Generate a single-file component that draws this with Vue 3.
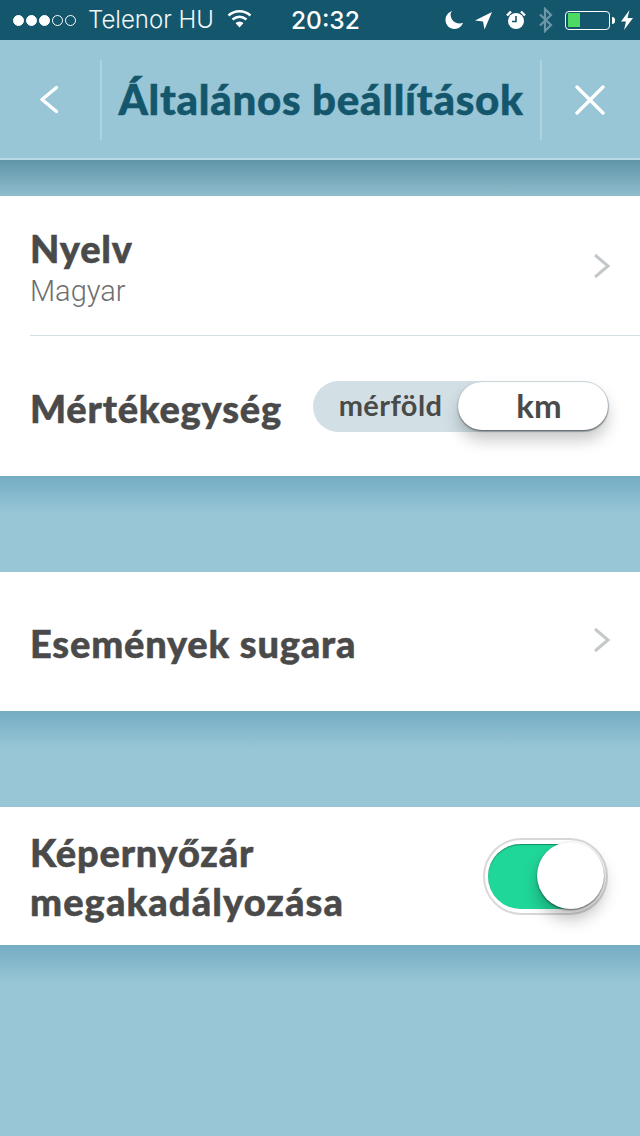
<template>
  <div class="screen">
    <div class="status">
      <div class="status-left">
        <span class="dots">
          <i class="dot on"></i><i class="dot on"></i><i class="dot on"></i><i class="dot"></i><i class="dot"></i>
        </span>
        <span class="carrier">Telenor HU</span>
        <svg class="wifi" width="26" height="20" viewBox="0 0 26 20">
          <path d="M1.5 6.5C7.8.9 17.2.9 23.500 6.500" fill="none" stroke="#fff" stroke-width="2.400"/>
          <path d="M5.500 10.500C9.900 6.900 15.100 6.900 19.500 10.500" fill="none" stroke="#fff" stroke-width="2.400"/>
          <path d="M8.500 14C11 12 14 12 16.500 14L12.500 18.500Z" fill="#fff"/>
        </svg>
      </div>
      <span class="time">20:32</span>
      <div class="status-right">
        <svg class="moon" width="19" height="20" viewBox="0 0 19 20"><path d="M7.500 1C3.500 2 .5 5.500.5 10c0 5 4 9 9 9 4 0 7.300-2.600 8.500-6.200-1.100.5-2.200.7-3.400.7-5 0-9-4-9-9 0-1.300.6-2.700 1.900-3.500Z" fill="#fff"/></svg>
        <svg class="arrow" width="19" height="19" viewBox="0 0 19 19"><path d="M18 1 1 9.500l8 1 1.500 8Z" fill="#fff"/></svg>
        <svg class="alarm" width="20" height="20" viewBox="0 0 20 20">
          <circle cx="10" cy="11" r="8" fill="#fff"/>
          <path d="M10 6v5.500H6" fill="none" stroke="#14566b" stroke-width="1.600"/>
          <path d="M1 5.500 5 1.500M19 5.500l-4-4" stroke="#fff" stroke-width="2.400" fill="none"/>
        </svg>
        <svg class="bt" width="15" height="26" viewBox="0 0 15 26"><path d="M2 7.500l11 10.500-6 6V2l6 6L2 18.500" fill="none" stroke="#6c97a6" stroke-width="2.200"/></svg>
        <div class="battery"><div class="battery-fill"></div></div>
        <div class="battery-tip"></div>
        <svg class="bolt" width="12" height="20" viewBox="0 0 12 20"><path d="M8.500 0 0 11.500h5L3 20l9-12H6.500Z" fill="#fff"/></svg>
      </div>
    </div>

    <header class="nav">
      <button class="nav-btn nav-back" aria-label="Vissza">
        <svg width="22" height="32" viewBox="0 0 22 32"><path d="M19.500 3.500 5 15.500l14.500 12" fill="none" stroke="#fff" stroke-width="3.400" stroke-linecap="round" stroke-linejoin="round"/></svg>
      </button>
      <h1 class="title">Általános beállítások</h1>
      <button class="nav-btn nav-close" aria-label="Bezárás">
        <svg width="30" height="30" viewBox="0 0 30 30"><path d="M2 2l26 26M28 2 2 28" fill="none" stroke="#fff" stroke-width="3.400" stroke-linecap="round"/></svg>
      </button>
    </header>

    <main class="content">
      <section class="card first">
        <div class="row lang">
          <div>
            <div class="label">Nyelv</div>
            <div class="sub">Magyar</div>
          </div>
          <svg class="chev" width="18" height="26" viewBox="0 0 18 26"><path d="M2 2l13 11L2 24" fill="none" stroke="#c4c8ca" stroke-width="3"/></svg>
        </div>
        <div class="sep"></div>
        <div class="row unit">
          <div class="label">Mértékegység</div>
          <div class="seg">
            <span class="seg-off">mérföld</span>
            <span class="seg-on">km</span>
          </div>
        </div>
      </section>

      <section class="card radius">
        <div class="label">Események sugara</div>
        <svg class="chev" width="18" height="26" viewBox="0 0 18 26"><path d="M2 2l13 11L2 24" fill="none" stroke="#c4c8ca" stroke-width="3"/></svg>
      </section>

      <section class="card lock">
        <div class="label">Képernyőzár<br><span class="wide">megakadályozása</span></div>
        <div class="switch"><div class="track"></div><div class="knob"></div></div>
      </section>
    </main>
  </div>
</template>

<script setup>
</script>

<style>
html, body { margin: 0; background: #98c6d6; }
</style>

<style scoped>
.screen {
  width: 640px;
  height: 1136px;
  overflow: hidden;
  background: #98c6d6;
  display: flex;
  flex-direction: column;
  font-family: Lato, "Noto Sans", sans-serif;
}
.status {
  height: 40px;
  background: #14566b;
  color: #fff;
  position: relative;
  display: flex;
  align-items: center;
  justify-content: space-between;
  padding: 0 7px 0 13px;
  font-family: Inter, "Liberation Sans", sans-serif;
  flex: none;
}
.status-left, .status-right { display: flex; align-items: center; }
.dots { display: flex; gap: 2px; margin-right: 12px; }
.dot { width: 11px; height: 11px; box-sizing: border-box; border: 1px solid #fff; border-radius: 50%; }
.dot.on { background: #fff; }
.carrier { font-size: 24px; font-weight: 300; line-height: 40px; color: #f0f6f8; }
.wifi { margin-left: 13px; margin-top: -3px; }
.time { position: absolute; left: 291px; top: 0; line-height: 41px; font-size: 24.500px; font-weight: 500; }
.moon { margin-right: 10px; }
.arrow { margin-right: 13px; }
.alarm { margin-right: 12px; }
.bt { margin-right: 12px; }
.battery {
  width: 45px; height: 19px; box-sizing: border-box;
  border: 1.500px solid #fff; border-radius: 4px; padding: 1.500px;
}
.battery-fill { width: 12px; height: 100%; background: #4cd964; }
.battery-tip { width: 3px; height: 7px; margin-left: 2px; margin-right: 6px; background: #fff; border-radius: 0 3px 3px 0; }
.nav {
  height: 118px;
  flex: none;
  display: flex;
  align-items: center;
  border-bottom: 2px solid #b9dbe6;
}
.nav-btn {
  appearance: none; border: 0; background: none; padding: 0;
  height: 80px; display: flex; align-items: center; justify-content: center;
  flex: none; margin-top: 2px;
}
.nav-back { width: 102px; border-right: 2px solid #aed2de; box-sizing: border-box; padding-right: 4px; }
.nav-close { width: 100px; border-left: 2px solid #aed2de; box-sizing: border-box; padding-right: 2px; }
.title {
  flex: 1; margin: 0; text-align: center; white-space: nowrap;
  font-size: 42px; font-weight: 900; color: #14566b; line-height: 80px;
  letter-spacing: .74px; -webkit-text-stroke: .5px #14566b;
}
.content {
  flex: 1;
  display: flex;
  flex-direction: column;
  padding-top: 36px;
  background: linear-gradient(#5f95a8 0, #8fbdcd 36px, #98c6d6 36px);
}
.card { background: #fff; position: relative; }
.first { height: 280px; }
.card::after {
  content: ""; position: absolute; left: 0; right: 0; top: 100%; height: 38px;
  background: linear-gradient(#74adc3, #98c6d6);
}
.row { display: flex; align-items: center; justify-content: space-between; padding-left: 30px; }
.lang { height: 139px; padding-right: 29px; }
.sep { height: 1px; background: #d3dfe3; margin-left: 30px; }
.unit { height: 140px; padding-right: 31px; }
.label {
  font-size: 38px; font-weight: 900; color: #4a4a4a; line-height: 49px;
  letter-spacing: .8px; -webkit-text-stroke: .5px #4a4a4a;
}
.wide { letter-spacing: 1.1px; }
.sub { font-size: 29px; font-weight: 300; color: #6f6f6f; line-height: 34px; margin-top: 1px; font-family: Roboto, "Liberation Sans", sans-serif; }
.chev { flex: none; }
.seg {
  width: 296px; height: 51px; border-radius: 26px; background: #d2e0e5;
  display: flex; align-items: center; position: relative;
}
.seg-off { width: 145px; box-sizing: border-box; padding-left: 10px; text-align: center; font-size: 29px; line-height: 46px; font-weight: 700; color: #4a4a4a; letter-spacing: .4px; margin-top: -2px; }
.seg-on {
  width: 150px; height: 48px; line-height: 46px; box-sizing: border-box; padding-left: 12px; border-radius: 24px; background: #fff; text-align: center;
  font-size: 33px; font-weight: 700; color: #4a4a4a;
  box-shadow: 0 1px 2px rgba(0,0,0,.5), 0 10px 16px rgba(0,0,0,.22);
}
.unit .label { margin-top: 4px; }
.radius {
  margin-top: 96px; height: 139px;
  display: flex; align-items: center; justify-content: space-between;
  padding: 0 29px 0 30px;
}
.radius .label { margin-top: 4px; }
.radius .chev { margin-top: -4px; }
.lock {
  margin-top: 96px; height: 138px;
  display: flex; align-items: center; justify-content: space-between;
  padding: 0 32px 0 30px;
}
.lock .label { margin-top: 2px; }
.switch {
  width: 125px; height: 77px; box-sizing: border-box; border: 2px solid #d8d8d8; border-radius: 39px;
  position: relative; background: #fff;
}
.track { position: absolute; left: 3px; top: 4px; bottom: 4px; width: 84px; border-radius: 33px 0 0 33px; background: #20d79a; box-shadow: inset 0 1px 1px rgba(0,0,0,.35); }
.knob {
  position: absolute; right: 2px; top: 2px; width: 67px; height: 67px; border-radius: 50%; background: #fff;
  box-shadow: 0 1px 2px rgba(0,0,0,.55), 0 10px 16px rgba(0,0,0,.25);
}
</style>
